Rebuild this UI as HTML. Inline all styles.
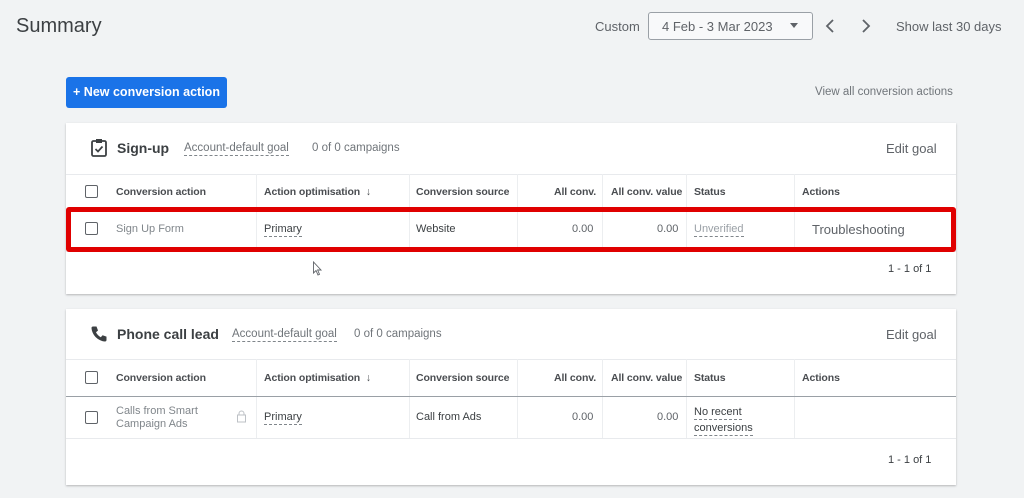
<!DOCTYPE html>
<html><head><meta charset="utf-8"><style>
*{box-sizing:border-box;margin:0;padding:0}
body{width:1024px;height:498px;background:#f1f3f4;font-family:"Liberation Sans",sans-serif;position:relative;overflow:hidden;color:#3c4043}
.a{position:absolute;white-space:nowrap}
.card{position:absolute;left:66px;width:890px;background:#fff;box-shadow:0 1px 2px rgba(0,0,0,.25)}
.hl{position:absolute;left:0;right:0;height:1px;background:#e8eaed}
.vl{position:absolute;width:1px;background:#eceef0}
.cb{position:absolute;width:13px;height:13px;border:1.5px solid #5f6368;border-radius:2px}
.th{font-size:10.5px;font-weight:bold;color:#4a4d51;letter-spacing:-0.1px}
.td{font-size:11px;color:#5f6368}
.dash{border-bottom:1px dashed #80868b;padding-bottom:1px}
</style></head><body>
<div class="a" style="left:16px;top:15px;font-size:20px;color:#3c4043">Summary</div>
<div class="a" style="left:595px;top:19px;font-size:13px;color:#5f6368">Custom</div>
<div class="a" style="left:648px;top:12px;width:165px;height:28px;border:1px solid #9aa0a6;border-radius:3px;background:#f8f9fa"></div>
<div class="a" style="left:662px;top:19px;font-size:13px;color:#5f6368">4 Feb - 3 Mar 2023</div>
<div class="a" style="left:790px;top:23px;width:0;height:0;border-left:4.5px solid transparent;border-right:4.5px solid transparent;border-top:5px solid #5f6368"></div>
<svg class="a" style="left:822px;top:17px" width="16" height="18"><path d="M11 3 L5 9 L11 15" stroke="#5f6368" stroke-width="1.8" fill="none"/></svg>
<svg class="a" style="left:858px;top:17px" width="16" height="18"><path d="M5 3 L11 9 L5 15" stroke="#5f6368" stroke-width="1.8" fill="none"/></svg>
<div class="a" style="left:896px;top:19px;font-size:13px;color:#5f6368">Show last 30 days</div>
<div class="a" style="left:66px;top:77px;width:161px;height:31px;background:#1a73e8;border-radius:3px;color:#fff;font-size:12.5px;font-weight:bold;line-height:31px;text-align:center">+ New conversion action</div>
<div class="a" style="left:815px;top:86px;font-size:11.5px;color:#70757a">View all conversion actions</div>

<!-- card 1 -->
<div class="card" style="top:123px;height:171px">
  <svg class="a" style="left:24px;top:15px" width="18" height="20"><rect x="2" y="3" width="14" height="15" rx="1.5" stroke="#3c4043" stroke-width="1.8" fill="none"/><rect x="6" y="1" width="6" height="4" fill="#3c4043"/><path d="M5.5 11 L8 13.5 L12.5 8.5" stroke="#3c4043" stroke-width="1.7" fill="none"/></svg>
  <div class="a" style="left:51px;top:17px;font-size:14px;font-weight:bold;color:#3c4043">Sign-up</div>
  <div class="a" style="left:118px;top:19px;font-size:11.5px;color:#70757a"><span class="dash">Account-default goal</span></div>
  <div class="a" style="left:246px;top:19px;font-size:11.5px;color:#70757a">0 of 0 campaigns</div>
  <div class="a" style="left:820px;top:18px;font-size:13px;color:#5f6368">Edit goal</div>
  <div class="hl" style="top:51px"></div>
  <div class="vl" style="left:190px;top:51px;height:77px"></div><div class="vl" style="left:343px;top:51px;height:77px"></div><div class="vl" style="left:451px;top:51px;height:77px"></div><div class="vl" style="left:536px;top:51px;height:77px"></div><div class="vl" style="left:620px;top:51px;height:77px"></div><div class="vl" style="left:728px;top:51px;height:77px"></div>
  <div class="cb" style="left:19px;top:62px"></div>
  <div class="a th" style="left:50px;top:63px">Conversion action</div>
  <div class="a th" style="left:198px;top:63px">Action optimisation &nbsp;<span style="font-weight:normal">↓</span></div>
  <div class="a th" style="left:350px;top:63px">Conversion source</div>
  <div class="a th" style="left:488px;top:63px">All conv.</div>
  <div class="a th" style="left:545px;top:63px">All conv. value</div>
  <div class="a th" style="left:628px;top:63px">Status</div>
  <div class="a th" style="left:736px;top:63px">Actions</div>
  <div class="hl" style="top:87px"></div>
  <div class="cb" style="left:19px;top:99px"></div>
  <div class="a td" style="left:50px;top:100px;color:#80868b">Sign Up Form</div>
  <div class="a td" style="left:198px;top:100px;color:#3c4043"><span class="dash">Primary</span></div>
  <div class="a td" style="left:350px;top:100px;color:#3c4043">Website</div>
  <div class="a td" style="left:506px;top:100px">0.00</div>
  <div class="a td" style="left:591px;top:100px">0.00</div>
  <div class="a td" style="left:628px;top:100px;color:#9aa0a6"><span class="dash">Unverified</span></div>
  <div class="a" style="left:746px;top:99px;font-size:13px;color:#5f6368">Troubleshooting</div>
  <div class="hl" style="top:128px"></div>
  <div class="a td" style="left:822px;top:140px;color:#3c4043">1 - 1 of 1</div>
  <svg class="a" style="left:246px;top:138px" width="12" height="16"><path d="M1.5 1 L1.5 12 L4 9.5 L6 14 L7.5 13.3 L5.6 9 L9 9 Z" fill="#fff" stroke="#5f6368" stroke-width="0.9"/></svg>
</div>
<div class="a" style="left:66px;top:207px;width:890px;height:45px;border:5px solid #e00000;border-radius:3px"></div>

<!-- card 2 -->
<div class="card" style="top:309px;height:176px">
  <svg class="a" style="left:23px;top:15px" width="20" height="20"><path d="M4 2.5 L7.5 2.5 L9 6.5 L7 8.3 C8.2 10.6 9.6 12 11.8 13.2 L13.6 11.2 L17.5 12.6 L17.5 16 C17.5 17 16.8 17.5 16 17.5 C9 17 3 11 2.5 4 C2.5 3.2 3 2.5 4 2.5 Z" fill="#3c4043"/></svg>
  <div class="a" style="left:51px;top:17px;font-size:14px;font-weight:bold;color:#3c4043">Phone call lead</div>
  <div class="a" style="left:166px;top:19px;font-size:11.5px;color:#70757a"><span class="dash">Account-default goal</span></div>
  <div class="a" style="left:288px;top:19px;font-size:11.5px;color:#70757a">0 of 0 campaigns</div>
  <div class="a" style="left:820px;top:18px;font-size:13px;color:#5f6368">Edit goal</div>
  <div class="hl" style="top:50px"></div>
  <div class="vl" style="left:190px;top:50px;height:79px"></div><div class="vl" style="left:343px;top:50px;height:79px"></div><div class="vl" style="left:451px;top:50px;height:79px"></div><div class="vl" style="left:536px;top:50px;height:79px"></div><div class="vl" style="left:620px;top:50px;height:79px"></div><div class="vl" style="left:728px;top:50px;height:79px"></div>
  <div class="cb" style="left:19px;top:62px"></div>
  <div class="a th" style="left:50px;top:63px">Conversion action</div>
  <div class="a th" style="left:198px;top:63px">Action optimisation &nbsp;<span style="font-weight:normal">↓</span></div>
  <div class="a th" style="left:350px;top:63px">Conversion source</div>
  <div class="a th" style="left:488px;top:63px">All conv.</div>
  <div class="a th" style="left:545px;top:63px">All conv. value</div>
  <div class="a th" style="left:628px;top:63px">Status</div>
  <div class="a th" style="left:736px;top:63px">Actions</div>
  <div class="hl" style="top:87px;background:#9aa0a6"></div>
  <div class="cb" style="left:19px;top:102px"></div>
  <div class="a td" style="left:50px;top:96px;color:#80868b;line-height:13px">Calls from Smart<br>Campaign Ads</div>
  <svg class="a" style="left:170px;top:101px" width="11" height="13"><rect x="1.5" y="5" width="8" height="7" fill="none" stroke="#bdc1c6"/><path d="M3 5 V3.5 a2.5 2.5 0 0 1 5 0 V5" fill="none" stroke="#bdc1c6"/></svg>
  <div class="a td" style="left:198px;top:102px;color:#3c4043"><span class="dash">Primary</span></div>
  <div class="a td" style="left:350px;top:102px;color:#3c4043">Call from Ads</div>
  <div class="a td" style="left:506px;top:102px">0.00</div>
  <div class="a td" style="left:591px;top:102px">0.00</div>
  <div class="a td" style="left:628px;top:95px;color:#3c4043;line-height:16px"><span class="dash">No recent</span><br><span class="dash">conversions</span></div>
  <div class="hl" style="top:129px"></div>
  <div class="a td" style="left:822px;top:145px;color:#3c4043">1 - 1 of 1</div>
</div>
</body></html>
